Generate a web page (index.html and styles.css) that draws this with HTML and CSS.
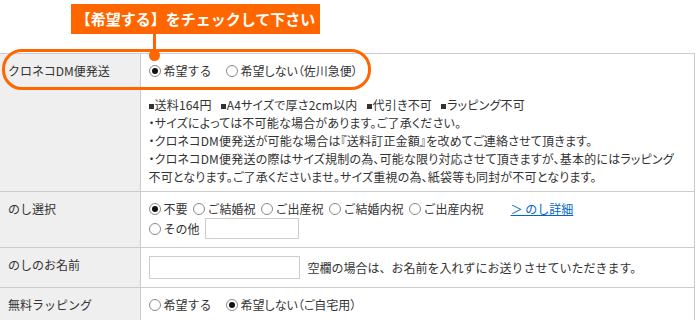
FILE: index.html
```html
<!DOCTYPE html>
<html lang="ja">
<head>
<meta charset="utf-8">
<link rel="stylesheet" href="styles.css">
</head>
<body>
<div class="page">
  <div class="callout">【希望する】をチェックして下さい</div>
  <div class="connector"></div>
  <div class="dot"></div>
  <div class="ring"></div>
  <table class="form">
    <tr>
      <th>クロネコDM便発送</th>
      <td class="first">
        <div class="line">
          <label class="opt gap"><span class="radio on"></span>希望する</label>
          <label class="opt prop"><span class="radio"></span>希望しない（佐川急便）</label>
        </div>
        <div class="notes">
          <div><span class="sq"></span>送料164円<span class="sp"></span><span class="sq"></span>A4サイズで厚さ2cm以内<span class="sp"></span><span class="sq"></span>代引き不可<span class="sp"></span><span class="sq"></span>ラッピング不可</div>
          <div>・サイズによっては不可能な場合があります。ご了承ください。</div>
          <div>・クロネコDM便発送が可能な場合は『送料訂正金額』を改めてご連絡させて頂きます。</div>
          <div>・クロネコDM便発送の際はサイズ規制の為、可能な限り対応させて頂きますが、基本的にはラッピング<br>不可となります。ご了承くださいませ。サイズ重視の為、紙袋等も同封が不可となります。</div>
        </div>
      </td>
    </tr>
    <tr>
      <th>のし選択</th>
      <td>
        <div class="line">
          <label class="opt"><span class="radio on"></span>不要</label>
          <label class="opt"><span class="radio"></span>ご結婚祝</label>
          <label class="opt"><span class="radio"></span>ご出産祝</label>
          <label class="opt"><span class="radio"></span>ご結婚内祝</label>
          <label class="opt"><span class="radio"></span>ご出産内祝</label>
          <a class="more" href="#">＞ のし詳細</a>
        </div>
        <div class="line">
          <label class="opt"><span class="radio"></span>その他</label>
          <span class="field short"></span>
        </div>
      </td>
    </tr>
    <tr>
      <th>のしのお名前</th>
      <td>
        <div class="line">
          <span class="field name"></span>
          <span class="hint">空欄の場合は、お名前を入れずにお送りさせていただきます。</span>
        </div>
      </td>
    </tr>
    <tr>
      <th>無料ラッピング</th>
      <td>
        <div class="line">
          <label class="opt gap"><span class="radio"></span>希望する</label>
          <label class="opt prop"><span class="radio on"></span>希望しない（ご自宅用）</label>
        </div>
      </td>
    </tr>
  </table>
</div>
</body>
</html>
```
FILE: styles.css
```css
* { box-sizing: border-box; }
html, body { margin: 0; padding: 0; background: #fff; }
body {
  font-family: "Noto Sans CJK JP", "Noto Sans", sans-serif;
  font-size: 12px;
  color: #333;
}
.page {
  position: relative;
  width: 697px;
  padding-top: 4px;
}
.callout {
  margin-left: 71px;
  width: 249px;
  height: 30px;
  background: #ff6600;
  color: #fff;
  font-weight: bold;
  font-size: 15px;
  line-height: 30px;
  text-align: center;
  margin-bottom: 19px;
}
.connector {
  position: absolute;
  left: 153px;
  top: 34px;
  width: 3px;
  height: 18px;
  background: #ff6600;
}
.dot {
  position: absolute;
  left: 149px;
  top: 50px;
  width: 11px;
  height: 11px;
  border-radius: 50%;
  background: #ff6600;
  z-index: 2;
}
.ring {
  position: absolute;
  left: 2px;
  top: 49px;
  width: 369px;
  height: 41px;
  border: 3px solid #ff6600;
  border-radius: 20px;
  z-index: 2;
  pointer-events: none;
}
.form {
  border-collapse: collapse;
  width: 695px;
}
.form th, .form td {
  border: 1px solid #ccc;
  padding: 8px 8px;
  vertical-align: top;
  line-height: 18px;
  text-align: left;
}
.form tr > :first-child { border-left: none; }
.form th {
  width: 140px;
  background: #efefef;
  font-weight: normal;
}
.form td.first { padding-bottom: 5px; }
.line {
  display: flex;
  align-items: center;
  min-height: 18px;
}
.opt {
  display: inline-flex;
  align-items: center;
  margin-right: 5px;
  white-space: nowrap;
}
.opt.gap { margin-right: 14px; }
.prop { font-feature-settings: "palt"; }
.radio {
  display: inline-block;
  flex: none;
  width: 12px;
  height: 12px;
  border: 1px solid #8a8a8a;
  border-radius: 50%;
  background: #fff;
  margin-right: 3px;
  position: relative;
}
.radio.on::after {
  content: "";
  position: absolute;
  left: 2px;
  top: 2px;
  width: 6px;
  height: 6px;
  border-radius: 50%;
  background: #111;
}
.more {
  color: #0066cc;
  text-decoration: underline;
  margin-left: 22px;
}
.field {
  display: inline-block;
  border: 1px solid #ccc;
  background: #fff;
}
.field.short { width: 94px; height: 21px; }
.field.name { width: 151px; height: 23px; }
.hint { margin-left: 8px; }
.notes {
  margin-top: 16px;
  white-space: nowrap;
  font-feature-settings: "palt";
  letter-spacing: 0.2px;
}
.sq {
  display: inline-block;
  width: 5px;
  height: 5px;
  background: #333;
  margin-right: 1px;
  vertical-align: 1px;
}
.sp { display: inline-block; width: 9px; }
```
